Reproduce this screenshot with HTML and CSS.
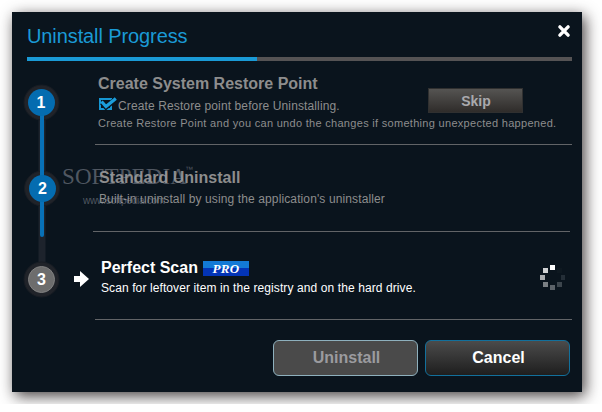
FILE: index.html
```html
<!DOCTYPE html>
<html lang="en">
<head>
  <meta charset="UTF-8" />
  <meta name="viewport" content="width=device-width, initial-scale=1.0" />
  <title>Uninstall Progress</title>
  <link rel="stylesheet" href="styles.css">
</head>
<body>
  <div class="dialog">
    <div class="header">
      <h1>Uninstall Progress</h1>
      <button class="close" aria-label="Close">
        <svg width="14" height="14" viewBox="0 0 14 14"><path d="M2.9 2.9 11.1 11.1M11.1 2.9 2.9 11.1" stroke="#fff" stroke-width="3.4" stroke-linecap="round" /></svg>
      </button>
    </div>
    <div class="progress"><div class="progress-bar"></div></div>

    <div class="content">
      <div class="rail">
        <svg width="68" height="259" viewBox="12 61 68 259">
          <path d="M42 120V266" stroke="#1d232c" stroke-width="7" />
          <g fill="#202329" stroke="#171c23">
            <circle cx="41.5" cy="102.5" r="17.5" />
            <circle cx="42" cy="188.5" r="17.5" />
            <circle cx="41.5" cy="279.5" r="17.5" />
          </g>
          <path d="M42 110V235" stroke="#0871b7" stroke-width="4" stroke-linecap="round" />
          <circle cx="41.5" cy="102.5" r="13.5" fill="#046cb0" />
          <circle cx="42.5" cy="188.5" r="13.5" fill="#046cb0" />
          <circle cx="41.5" cy="279.5" r="13" fill="#6d6d6d" stroke="#828282" />
          <g class="num">
            <text x="41" y="108">1</text>
            <text x="42.5" y="194">2</text>
            <text x="41.5" y="285">3</text>
          </g>
        </svg>
      </div>

      <div class="steps">
        <div class="step step-restore">
          <div class="step-text">
            <h2>Create System Restore Point</h2>
            <div class="option">
              <svg width="20" height="15" viewBox="0 0 20 15">
                <path d="M2 2H13V12H2Z" fill="none" stroke="#1696d2" stroke-width="2" />
                <path d="M4 5.5 8 10 18 2" fill="none" stroke="#0a141d" stroke-width="5" />
                <path d="M3.5 4.5 8 9.5 17.8 1.5" fill="none" stroke="#1c9edb" stroke-width="3.2" />
              </svg>
              <span>Create Restore point before Uninstalling.</span>
            </div>
            <p class="note">Create Restore Point and you can undo the changes if something unexpected happened.</p>
          </div>
          <button class="skip">Skip</button>
        </div>

        <div class="step step-standard">
          <div class="step-text">
            <h2>Standard Uninstall</h2>
            <p>Built-in uninstall by using the application's uninstaller</p>
          </div>
        </div>

        <div class="step step-scan">
          <svg class="arrow" width="16" height="16" viewBox="0 0 16 16"><path d="M0 5H6V0L15 8 6 16V11H0Z" fill="#fff" /></svg>
          <div class="step-text">
            <h2>Perfect Scan <span class="pro">PRO</span></h2>
            <p>Scan for leftover item in the registry and on the hard drive.</p>
          </div>
          <svg class="spinner" width="26" height="26" viewBox="0 0 26 26">
            <path d="M10 0h5v5h-5z" fill="#fff" />
            <path d="M3 3h5v5H3z" fill="#d0d2d3" />
            <path d="M0 10h5v5H0z" fill="#a9acae" />
            <path d="M3 17h5v5H3z" fill="#7b8084" />
            <path d="M10 20h5v5h-5z" fill="#5c6369" />
            <path d="M17 17h5v5h-5z" fill="#3d464d" />
            <path d="M21 10h4v5h-4z" fill="#242e37" />
            <path d="M17 3h5v5h-5z" fill="#0e1820" />
          </svg>
        </div>
      </div>
    </div>

    <div class="footer">
      <button class="btn" disabled>Uninstall</button>
      <button class="btn btn-cancel">Cancel</button>
    </div>

    <div class="watermark">
      <span class="wm-name">SOFTPEDIA</span><span class="wm-tm">™</span>
      <span class="wm-url">www.softpedia.com</span>
    </div>
  </div>
</body>
</html>
```
FILE: styles.css
```css
body {
  margin: 0;
  padding: 12px;
  background: #fff;
  font-family: "Liberation Sans", Arial, sans-serif;
}
h1, h2, p {
  margin: 0;
  white-space: nowrap;
}
button {
  padding: 0;
  font-family: inherit;
  font-weight: bold;
}
svg {
  display: block;
  flex: none;
}
.dialog {
  position: relative;
  box-sizing: border-box;
  width: 570px;
  height: 380px;
  background: #0a141d;
  box-shadow: 3px 4px 14px rgba(20, 14, 14, 0.8);
}
.header {
  display: flex;
  justify-content: space-between;
  height: 45px;
  padding: 0 11px 0 15px;
}
h1 {
  padding-top: 12px;
  font-size: 20px;
  font-weight: normal;
  line-height: 24px;
  letter-spacing: -0.1px;
  color: #1a9ad6;
}
.close {
  align-self: flex-start;
  margin-top: 12px;
  border: none;
  background: none;
}
.progress {
  height: 4px;
  margin: 0 10px 0 15px;
  background: #555354;
}
.progress-bar {
  width: 230px;
  height: 4px;
  background: #1a9ad6;
}
.content {
  display: flex;
  height: 259px;
}
.rail {
  width: 83px;
}
.num {
  fill: #fff;
  font-size: 16px;
  font-weight: bold;
  text-anchor: middle;
}
.steps {
  width: 477px;
}
.step {
  display: flex;
  box-sizing: border-box;
  border-bottom: 1px solid #626467;
  color: #8d8d8d;
}
h2 {
  font-size: 16px;
  line-height: 20px;
}
.step p {
  font-size: 12px;
  line-height: 18px;
  letter-spacing: 0.12px;
}
.step-restore {
  height: 84px;
  padding: 13px 0 0 3px;
}
.step-restore .step-text {
  width: 330px;
}
.option {
  display: flex;
  margin-top: 3px;
  font-size: 12px;
  line-height: 18px;
  letter-spacing: 0.12px;
  white-space: nowrap;
}
.step .note {
  margin-top: 1px;
  font-size: 11px;
  line-height: 14px;
  letter-spacing: 0.3px;
}
.skip {
  width: 95px;
  height: 25px;
  margin-top: 14px;
  padding-left: 1px;
  border: 1px solid #303030;
  background: linear-gradient(#555452, #2f2c2a);
  color: #a9a9ad;
  font-size: 14px;
}
.step-standard {
  height: 87px;
  margin-left: -2px;
  margin-right: 2px;
  padding: 23px 0 0 6px;
}
.step-standard p {
  margin-top: 2px;
}
.step-scan {
  height: 88px;
  margin-left: -21px;
  padding-top: 26px;
  border: none;
  color: #fff;
  background: linear-gradient(#626467, #626467) 21px 100% / 477px 1px no-repeat;
}
.arrow {
  margin-top: 13px;
}
.step-scan .step-text {
  flex: 1;
  margin-left: 11px;
}
.step-scan h2 {
  display: flex;
  gap: 5px;
}
.step-scan p {
  margin-top: 1px;
  letter-spacing: 0.1px;
}
.pro {
  width: 46px;
  height: 15px;
  margin-top: 3px;
  background: linear-gradient(#137ad6 48%, #0334b6 48%);
  font: italic bold 13px/15px "Liberation Serif", serif;
  letter-spacing: 0.3px;
  text-align: center;
}
.spinner {
  margin: 7px 6px 0 0;
}
.footer {
  display: flex;
  justify-content: flex-end;
  gap: 7px;
  padding: 20px 12px 0 0;
}
.btn {
  width: 145px;
  height: 36px;
  padding-left: 2px;
  border: 1px solid #8eb0bd;
  border-radius: 6px;
  background: #4a4a4a;
  color: #9b9b9f;
  font-size: 16px;
}
.btn-cancel {
  border-color: #12709c;
  background: linear-gradient(#4b4b4b, #1e1e1e);
  color: #fff;
}
.watermark {
  position: absolute;
  left: 50px;
  top: 150px;
  width: 134px;
  height: 48px;
  color: rgba(150, 155, 165, 0.5);
  white-space: nowrap;
}
.wm-name {
  font: 23px/30px "Liberation Serif", serif;
  letter-spacing: 0.1px;
}
.wm-tm {
  position: absolute;
  top: 3px;
  right: 3px;
  font-size: 8px;
}
.wm-url {
  display: block;
  margin-left: 21px;
  font-size: 10px;
  line-height: 18px;
  letter-spacing: -0.25px;
}
```
